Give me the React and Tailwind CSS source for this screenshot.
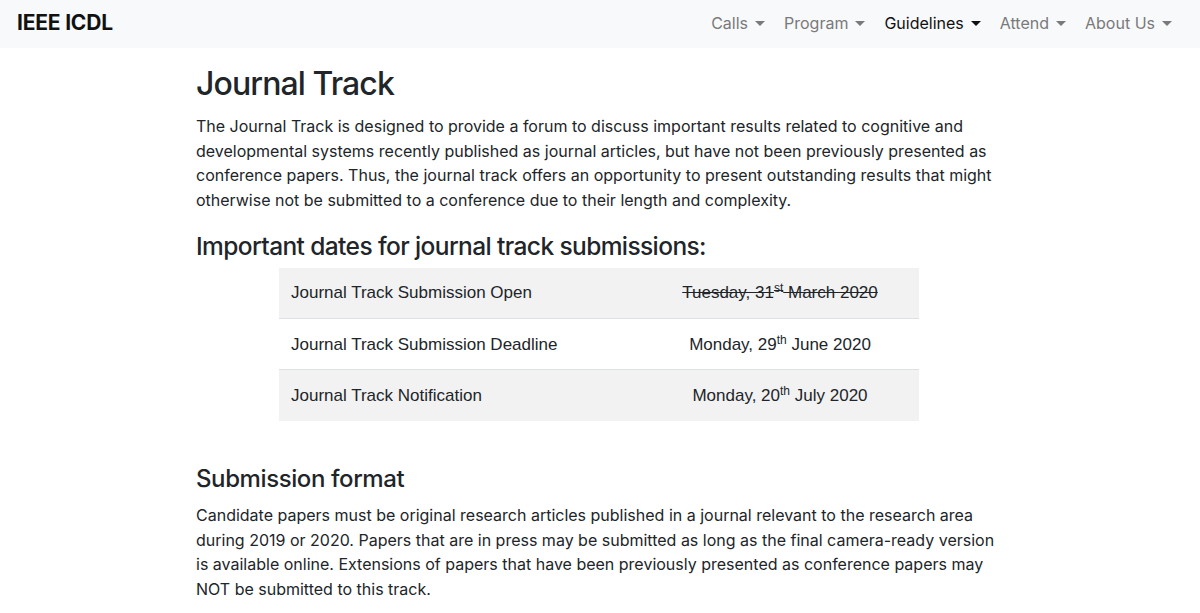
import { useState } from "react";

const navItems = ["Calls", "Program", "Guidelines", "Attend", "About Us"];

function Caret() {
  return <span className="ml-[7px] inline-block border-x-[5px] border-t-[5px] border-x-transparent border-t-current align-[3px]" />;
}

const dates = [
  { label: "Journal Track Submission Open", day: "Tuesday, 31", sup: "st", rest: " March 2020", past: true },
  { label: "Journal Track Submission Deadline", day: "Monday, 29", sup: "th", rest: " June 2020" },
  { label: "Journal Track Notification", day: "Monday, 20", sup: "th", rest: " July 2020" },
];

export default function App() {
  const [active] = useState("Guidelines");

  return (
    <div className="min-h-screen bg-white text-[#212529] font-['Inter','Noto_Sans',sans-serif]">
      <nav className="flex h-[48px] items-center justify-between bg-[#f8f9fa] pb-[2px] pl-[17px] pr-[28px]">
        <span className="text-[21px] font-bold tracking-[-0.2px] text-[#111]">IEEE ICDL</span>
        <ul className="flex items-center gap-[19px] text-[16px]">
          {navItems.map((n) => (
            <li key={n} className={n === active ? "text-[#111]" : "text-[#7a7a7a]"}>
              {n}
              <Caret />
            </li>
          ))}
        </ul>
      </nav>

      <main className="mx-auto w-[808px] pt-[14px]">
        <h1 className="text-[32px] font-medium leading-[44px] tracking-[-0.9px]">Journal Track</h1>
        <p className="mt-[8px] text-[16px] leading-[24.7px]">
          The Journal Track is designed to provide a forum to discuss important results related to cognitive and
          developmental systems recently published as journal articles, but have not been previously presented as
          conference papers. Thus, the journal track offers an opportunity to present outstanding results that might
          otherwise not be submitted to a conference due to their length and complexity.
        </p>

        <h3 className="mt-[16px] text-[24.5px] font-medium leading-[34px] tracking-[-0.6px]">
          Important dates for journal track submissions:
        </h3>

        <div className="mt-[5px] flex justify-center pr-[2px]">
          <table className="w-[640px] border-collapse font-['Liberation_Sans',Arial,sans-serif] text-[17px]">
            <tbody>
              {dates.map((d, i) => (
                <tr key={d.label} className={(i % 2 === 0 ? "bg-[#f2f2f2] " : "") + (i > 0 ? "border-t border-[#dee2e6]" : "")}>
                  <td className="h-[51px] px-[12px] align-middle">{d.label}</td>
                  <td className="h-[51px] w-[278px] px-[12px] text-center align-middle">
                    <span className={d.past ? "line-through" : ""}>
                      {d.day}
                      <sup className="text-[12px]">{d.sup}</sup>
                      {d.rest}
                    </span>
                  </td>
                </tr>
              ))}
            </tbody>
          </table>
        </div>

        <h3 className="mt-[41px] text-[24px] font-medium leading-[34px] tracking-[-0.4px]">Submission format</h3>
        <p className="mt-[7px] text-[16px] leading-[24.7px]">
          Candidate papers must be original research articles published in a journal relevant to the research area
          during 2019 or 2020. Papers that are in press may be submitted as long as the final camera-ready version
          is available online. Extensions of papers that have been previously presented as conference papers may
          NOT be submitted to this track.
        </p>
      </main>
    </div>
  );
}
